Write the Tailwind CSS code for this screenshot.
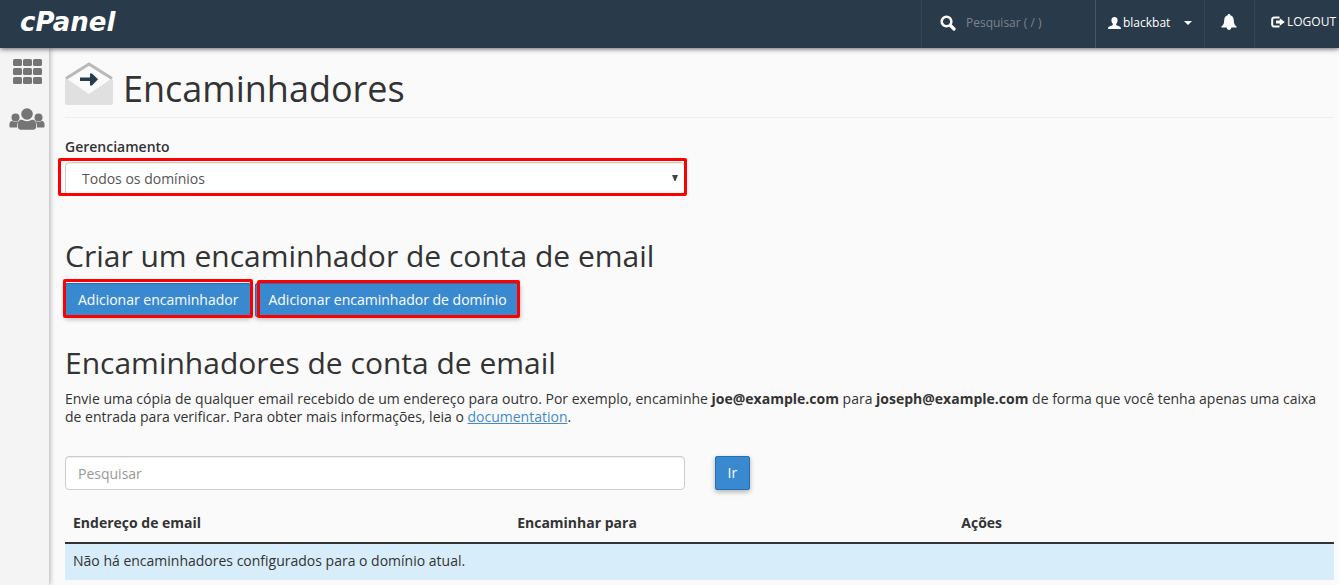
<!DOCTYPE html>
<html lang="pt-BR">

<head>
  <meta charset="UTF-8">
  <meta name="viewport" content="width=device-width, initial-scale=1.0">
  <title>cPanel - Encaminhadores</title>
  <script src="https://cdn.jsdelivr.net/npm/@tailwindcss/browser@4"></script>
</head>

<body class="bg-[#fafafa] min-h-screen flex flex-col overflow-x-hidden font-['Open_Sans',sans-serif] text-sm leading-[18px] text-[#333333]">

  <!-- Top bar -->
  <header class="relative z-10 flex h-12 items-stretch justify-between bg-[#293a4a] text-xs text-white shadow-[0_1px_5px_rgba(0,0,0,0.6)]">
    <a href="#" class="flex items-center pl-5 pb-1 font-['DejaVu_Sans',sans-serif] text-[26px] font-bold italic">cPanel</a>
    <div class="flex items-stretch">
      <div class="flex w-[174px] items-center gap-2.5 border-l border-[#34475a] pl-[18px] pb-[3px]">
        <svg class="size-4 shrink-0" viewBox="0 0 16 16" fill="none" stroke="currentColor" aria-hidden="true">
          <circle cx="6.5" cy="6.5" r="4.8" stroke-width="2.6" />
          <path d="M10.5 10.5L14 14" stroke-width="3.2" stroke-linecap="round" />
        </svg>
        <input type="text" aria-label="Pesquisar" placeholder="Pesquisar ( / )" class="w-28 bg-transparent outline-none placeholder:text-[#7d838a]">
      </div>
      <button type="button" class="flex w-[109px] items-center border-l border-[#43566a] pl-3 pb-[3px]">
        <svg class="mr-0.5 h-3 w-[13px]" viewBox="0 0 13 12" fill="currentColor" aria-hidden="true">
          <path d="M6.5 0C8.500 0 9.700 1.300 9.600 3.200C9.500 5 8.900 6 8.200 6.700V7.900C8.700 8.700 12.600 8.900 12.900 11V12H.1V11C.4 8.900 4.300 8.700 4.800 7.900V6.700C4.100 6 3.500 5 3.400 3.200C3.300 1.300 4.500 0 6.500 0Z" />
        </svg>
        blackbat
        <svg class="ml-3.5 h-1 w-2" viewBox="0 0 8 4" fill="currentColor" aria-hidden="true"><path d="M0 0H8L4 4Z" /></svg>
      </button>
      <button type="button" aria-label="Notificações" class="flex w-[50px] items-center justify-center border-l border-[#34475a] pb-[5px]">
        <svg class="size-4" viewBox="0 0 16 16" fill="currentColor" aria-hidden="true">
          <path d="M8 0C8.800 0 9.300.5 9.300 1.300C11.700 1.900 12.800 3.800 12.800 6.500C12.800 9.500 13.800 11.300 15.600 12.500V13.500H.4V12.500C2.200 11.300 3.200 9.500 3.200 6.500C3.200 3.800 4.300 1.900 6.700 1.300C6.700.5 7.200 0 8 0Z" />
          <path d="M5.700 13H10.300C10.100 15.300 9.300 16 8 16C6.700 16 5.900 15.300 5.700 13Z" />
        </svg>
      </button>
      <a href="#" class="flex items-center gap-0.5 border-l border-[#34475a] pr-[3px] pb-1 pl-4">
        <svg class="h-3 w-3.5" viewBox="0 0 14 12" aria-hidden="true">
          <path d="M8.500 1.500H3.500C2 1.500 1.200 2.300 1.200 3.600V8.400C1.200 9.700 2 10.500 3.500 10.500H8.500" fill="none" stroke="currentColor" stroke-width="2" />
          <path d="M5 4.500H8.800V2.200L13.800 6L8.800 9.800V7.500H5Z" fill="currentColor" />
        </svg>
        LOGOUT
      </a>
    </div>
  </header>

  <div class="flex flex-1">
    <!-- Side menu -->
    <nav class="mr-px flex w-[49px] shrink-0 flex-col items-center gap-6 bg-[#f4f4f4] pt-[11px] pl-[5px] shadow-[1px_0_5px_rgba(0,0,0,0.3)]">
      <a href="#" aria-label="Início" class="text-[#757575]">
        <svg class="h-[25px] w-[29px]" viewBox="0 0 29 25" fill="currentColor" aria-hidden="true">
          <rect x="0" y="0" width="9" height="7" rx="1.500" /><rect x="10" y="0" width="9" height="7" rx="1.500" /><rect x="20" y="0" width="9" height="7" rx="1.500" />
          <rect x="0" y="9" width="9" height="7" rx="1.500" /><rect x="10" y="9" width="9" height="7" rx="1.500" /><rect x="20" y="9" width="9" height="7" rx="1.500" />
          <rect x="0" y="18" width="9" height="7" rx="1.500" /><rect x="10" y="18" width="9" height="7" rx="1.500" /><rect x="20" y="18" width="9" height="7" rx="1.500" />
        </svg>
      </a>
      <a href="#" aria-label="Usuários" class="text-[#757575]">
        <svg class="h-[22px] w-9" viewBox="0 0 36 22" fill="currentColor" aria-hidden="true">
          <circle cx="6.500" cy="9.500" r="4" /><circle cx="29.500" cy="9.500" r="4" />
          <path d="M3 13C4 13 5 14 6.500 14C8 14 9 13.400 10 13.100C8.600 14.500 8 16.500 8 19.500H2C.8 19.500.4 19 .4 18C.4 15.500.8 13 3 13Z" />
          <path d="M33 13C32 13 31 14 29.500 14C28 14 27 13.400 26 13.100C27.400 14.500 28 16.500 28 19.500H34C35.200 19.500 35.600 19 35.600 18C35.600 15.500 35.200 13 33 13Z" />
          <circle cx="18" cy="6" r="5.800" />
          <path d="M12.500 11.800C14 11.800 15.400 13.200 18 13.200C20.600 13.200 22 11.800 23.500 11.800C26.300 11.800 27.200 14.500 27.200 18.500C27.200 20.500 26.200 21.700 24 21.700H12C9.800 21.700 8.800 20.500 8.800 18.500C8.800 14.500 9.700 11.800 12.500 11.800Z" />
        </svg>
      </a>
    </nav>

    <main class="min-w-0 flex-1 pr-[5px] pl-[15px]">
      <!-- Page title -->
      <div class="flex h-[70px] items-end gap-2.5 border-b border-[#eeeeee] pb-2">
        <svg class="h-12 w-12" viewBox="0 0 48 48" aria-hidden="true">
          <path d="M0 19L24 4L48 19V42Q48 44 46 44H2Q0 44 0 42Z" fill="#e0e0e0" />
          <path d="M2 18L24 4L46 18L24 33Z" fill="#fafafa" />
          <path d="M1 17.500L24 3L47 17.500" fill="none" stroke="#b9b9b9" stroke-width="3" />
          <path d="M15 16.500H25V12.500H27L33 18.200L27 24.500H25V20H15Z" fill="#293a4a" />
        </svg>
        <h1 class="text-4xl leading-10">Encaminhadores</h1>
      </div>

      <div class="grid grid-cols-2 gap-[30px] pt-5">
        <div>
          <label for="domain" class="mb-1.5 block font-semibold">Gerenciamento</label>
          <div class="relative">
            <select id="domain" class="block h-[34px] w-full appearance-none rounded border border-[#cccccc] bg-white px-4 text-[#555555] shadow-[inset_0_1px_1px_rgba(0,0,0,0.075)]">
              <option>Todos os domínios</option>
            </select>
            <svg class="pointer-events-none absolute top-[13px] right-[7px] h-1.5 w-1.5" viewBox="0 0 6 6" fill="#444444" aria-hidden="true"><path d="M0 0H6L3.500 6H2.500Z" /></svg>
            <span class="pointer-events-none absolute -top-1 -right-0.5 bottom-0 -left-[7px] rounded-xs border-3 border-[#ff0000]"></span>
          </div>
        </div>
      </div>

      <!-- Create forwarder -->
      <h2 class="pt-11 text-3xl leading-8">Criar um encaminhador de conta de email</h2>
      <div class="flex gap-1 pt-[11px]">
        <div class="relative">
          <button type="button" class="h-[34px] rounded-xs border border-[#286fb0] bg-[#3989d0] px-3 text-white shadow-[0_2px_5px_rgba(0,0,0,0.3)]">Adicionar encaminhador</button>
          <span class="pointer-events-none absolute -top-1 -right-0.5 -bottom-px -left-0.5 rounded-xs border-3 border-[#ff0000]"></span>
        </div>
        <div class="relative">
          <button type="button" class="h-[34px] rounded-xs border border-[#286fb0] bg-[#3989d0] px-3 text-white shadow-[0_2px_5px_rgba(0,0,0,0.3)]">Adicionar encaminhador de domínio</button>
          <span class="pointer-events-none absolute -top-[3px] right-0 -bottom-px left-0.5 rounded-xs border-3 border-[#ff0000]"></span>
        </div>
      </div>

      <!-- Forwarders list -->
      <h2 class="pt-[30px] text-3xl leading-8">Encaminhadores de conta de email</h2>
      <p class="pt-[11px]">Envie uma cópia de qualquer email recebido de um endereço para outro. Por exemplo, encaminhe <strong>joe@example.com</strong> para <strong>joseph@example.com</strong> de forma que você tenha apenas uma caixa de entrada para verificar. Para obter mais informações, leia o <a href="#" class="text-[#428bca] underline">documentation</a>.</p>

      <form class="grid grid-cols-2 gap-[30px] pt-[30px]">
        <input type="text" aria-label="Pesquisar encaminhadores" placeholder="Pesquisar" class="h-[34px] rounded border border-[#cccccc] bg-white px-3 shadow-[inset_0_1px_1px_rgba(0,0,0,0.075)] outline-none placeholder:text-[#999999]">
        <button type="button" class="h-[34px] justify-self-start rounded-xs border border-[#286fb0] bg-[#3989d0] px-3 text-white shadow-[0_2px_5px_rgba(0,0,0,0.3)]">Ir</button>
      </form>

      <table class="mt-3.5 w-full table-fixed text-left">
        <thead>
          <tr class="border-b-2 border-[#333333]">
            <th class="w-[35%] px-2 pt-2.5 pb-2.5">Endereço de email</th>
            <th class="w-[35%] px-2 pt-2.5 pb-2.5">Encaminhar para</th>
            <th class="w-[30%] px-2 pt-2.5 pb-2.5">Ações</th>
          </tr>
        </thead>
        <tbody>
          <tr class="bg-[#d7edf9]">
            <td colspan="3" class="p-2 pb-2.5">Não há encaminhadores configurados para o domínio atual.</td>
          </tr>
        </tbody>
      </table>
    </main>
  </div>

</body>

</html>
